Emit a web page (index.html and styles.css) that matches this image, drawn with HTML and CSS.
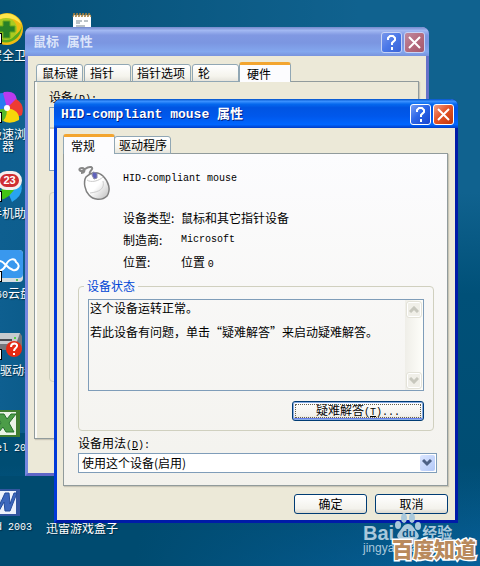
FILE: index.html
```html
<!DOCTYPE html>
<html lang="zh-CN">
<head>
<meta charset="utf-8">
<meta name="viewport" content="width=device-width, initial-scale=1">
<title>HID-compliant mouse 属性</title>
<link rel="stylesheet" href="styles.css">
</head>
<body>
<main class="desktop">
  <div class="shortcut safe">
    <svg width="34" height="34" viewBox="0 0 34 34"><circle cx="17" cy="17" r="16" fill="#eebc12"/><path d="M4 25C13 35 31 31 32 14c-3 10-15 16-28 11z" fill="#58a91c"/><path d="M3 9C10-1 27-1 31 12 24 5 14 5 3 9z" fill="#ffe64b"/><circle cx="16" cy="17" r="11" fill="#a9cb21"/><path d="M13 9h7v5h5v6h-5v6h-7v-6H8v-6h5z" fill="#288127" stroke="#69a81d"/></svg>
    <span class="arrow"></span><span class="name">安全卫士</span>
  </div>
  <div class="shortcut browser">
    <svg width="34" height="34" viewBox="0 0 34 34"><path d="M17 17Q7 7 14 1q12-2 13 8z" fill="#b83aee"/><path d="M17 17L26 8q9 5 6 16-5 4-15-7z" fill="#ed3b33"/><path d="M17 17q13 2 12 12-9 5-16 1z" fill="#f7d60a"/><path d="M17 17q0 14-8 14-8-5-8-13z" fill="#55b72a"/><path d="M17 17Q4 21 2 11 5 2 13 2z" fill="#287bf0"/><circle cx="17" cy="17" r="3" fill="#fff"/></svg>
    <span class="arrow"></span><span class="name">极速浏<br>&ensp;&ensp;器</span>
  </div>
  <div class="shortcut phone">
    <svg width="34" height="34" viewBox="0 0 34 34"><path d="M17 20Q24 8 30 11q6 13-8 21z" fill="#28a4f0"/><path d="M7 29q11 3 20-14l-14 2z" fill="#42c515"/><path d="M3 10l12-3 3 8-11 4z" fill="#ffc325"/></svg>
    <span class="badge">23</span><span class="arrow"></span><span class="name">手机助手</span>
  </div>
  <div class="shortcut cloud">
    <svg width="34" height="34" viewBox="0 0 34 34"><rect width="33" height="32" rx="4" fill="#d5dde0"/><rect width="33" height="28" rx="4" fill="#3998ee"/><path d="M4 20c7 3 10-1 12-5 3-7 9-7 10-3 5 3 2 9-3 8-8-3-9-10-14-9-6-1-9 6-5 9z" fill="none" stroke="#fff" stroke-width="2"/><circle cx="27" cy="30" r="1" fill="#37b52b"/></svg>
    <span class="arrow"></span><span class="name"><span class="latin">360</span>云盘</span>
  </div>
  <div class="shortcut driver">
    <svg width="34" height="34" viewBox="0 0 34 34"><path d="M0 5h30l2 3v14H0z" fill="#74777c"/><path d="M0 5h30l-4 11H0z" fill="#c8cbce"/><path d="M2 12h20" stroke="#4a4c51" stroke-width="2"/><circle cx="25" cy="10" r="1" fill="#32d51a"/><circle cx="24" cy="21" r="8" fill="#e52b14"/><path d="M21 19c0-5 7-4 6-1 0 2-3 2-3 5m0 2v2" fill="none" stroke="#fff" stroke-width="2"/></svg>
    <span class="arrow"></span><span class="name">驱动器</span>
  </div>
  <div class="shortcut excel">
    <svg width="34" height="34" viewBox="0 0 34 34"><path d="M1 3h31v27H1z" fill="#3f7c30"/><path d="M3 5h25v23H3z" fill="#eaf3e6"/><path d="M8 7h8l3 5 4-5h5l-7 9 5 9h-8l-3-5-4 5H6l7-9z" fill="#4c9d48" stroke="#24712b"/></svg>
    <span class="arrow"></span><span class="name latin">Excel 2003</span>
  </div>
  <div class="shortcut word">
    <svg width="34" height="34" viewBox="0 0 34 34"><path d="M1 3h31v27H1z" fill="#3256a0"/><path d="M3 5h25v23H3z" fill="#edf2fc"/><path d="M6 7h5l1 11 5-11h4l1 11 4-11h3l-7 18h-5l-1-9-5 9H7z" fill="#3d68be" stroke="#254d9b"/></svg>
    <span class="arrow"></span><span class="name latin">Word 2003</span>
  </div>
  <div class="shortcut game"><span class="name">迅雷游戏盒子</span></div>
  <svg class="notepad" width="20" height="24" viewBox="0 0 20 24"><path d="M1 3h18v20H1z" fill="#fff"/><path d="M1 5l1-4 2 4 1-4 2 4 1-4 2 4 1-4 2 4 1-4 2 4 1-4 2 4" fill="none" stroke="#a8803c"/><path d="M4 9h6M4 11h4M12 9h4M4 14h9" stroke="#77858f"/></svg>

  <section class="window inactive" aria-label="鼠标 属性">
    <header class="titlebar"><h2>鼠标 属性</h2>
      <button class="cap help" aria-label="帮助"><svg width="17" height="17" viewBox="0 0 17 17"><path d="M5 6V4l2-2h3l2 2v2L9 9v2m0 2v3" fill="none" stroke="currentColor" stroke-width="2"/></svg></button>
      <button class="cap close" aria-label="关闭"><svg width="17" height="17" viewBox="0 0 17 17"><path d="M3 3l11 11M14 3L3 14" stroke="currentColor" stroke-width="2"/></svg></button>
    </header>
    <div class="client">
      <div class="tabs" role="tablist">
        <button role="tab" class="tab">鼠标键</button><button role="tab" class="tab">指针</button><button role="tab" class="tab long">指针选项</button><button role="tab" class="tab">轮</button><button role="tab" class="tab active" aria-selected="true">硬件</button>
      </div>
      <div class="panel">
        <div class="caption">设备<span class="latin">(<u>D</u>):</span></div>
        <div class="list"><div class="listhead"></div></div>
        <div class="frame"></div>
      </div>
    </div>
  </section>

  <section class="window front" aria-label="HID-compliant mouse 属性">
    <header class="titlebar"><h1>HID-compliant mouse 属性</h1>
      <button class="cap help" aria-label="帮助"><svg width="17" height="17" viewBox="0 0 17 17"><path d="M5 6V4l2-2h3l2 2v2L9 9v2m0 2v3" fill="none" stroke="currentColor" stroke-width="2"/></svg></button>
      <button class="cap close" aria-label="关闭"><svg width="17" height="17" viewBox="0 0 17 17"><path d="M3 3l11 11M14 3L3 14" stroke="currentColor" stroke-width="2"/></svg></button>
    </header>
    <div class="client">
      <div class="tabs" role="tablist">
        <button role="tab" class="tab active" aria-selected="true">常规</button><button role="tab" class="tab long">驱动程序</button>
      </div>
      <div class="panel">
        <div class="device">
          <svg width="34" height="36" viewBox="0 0 34 36"><defs><linearGradient id="shell" x2="1" y2="1"><stop offset=".5" stop-color="#fff"/><stop offset="1" stop-color="#bbb"/></linearGradient></defs><path d="M12 9C10 6 17 4 13 2 9 1 7 5 4 6 1 6 0 3 4 3c4 0 3 5-1 5" fill="none" stroke="#888" stroke-width="2"/><path d="M8 12c5-5 12-6 17-1 6 6 8 14 4 20-5 5-14 4-18-1-4-4-6-13-3-18z" fill="url(#shell)" stroke="#808080" stroke-width="1.5"/><path d="M9 15c4 3 12 1 16-3M25 16c2 8-4 11-13 12" fill="none" stroke="#ccc"/><path d="M15 7l4 1v5l-3 1-2-4z" fill="#5f61bd" stroke="#8c8ca5"/></svg>
          <div class="latin model">HID-compliant mouse</div>
          <dl><dt>设备类型:</dt><dd>鼠标和其它指针设备</dd><dt>制造商:</dt><dd class="latin">Microsoft</dd><dt>位置:</dt><dd>位置 <span class="latin">0</span></dd></dl>
        </div>
        <fieldset>
          <legend><label for="status">设备状态</label></legend>
          <div class="statusbox">
            <textarea id="status" readonly>这个设备运转正常。

若此设备有问题，单击“疑难解答”来启动疑难解答。</textarea>
            <div class="scroll" aria-hidden="true"><span><svg width="10" height="7" viewBox="0 0 10 7"><path d="M1 6l4-4 4 4" fill="none" stroke="#c7c7bd" stroke-width="3"/></svg></span><span><svg width="10" height="7" viewBox="0 0 10 7"><path d="M1 1l4 4 4-4" fill="none" stroke="#c7c7bd" stroke-width="3"/></svg></span></div>
          </div>
          <button class="push focused">疑难解答<span class="latin">(<u>T</u>)...</span></button>
        </fieldset>
        <label class="usage" for="usage">设备用法<span class="latin">(<u>D</u>):</span></label>
        <div class="combo"><select id="usage"><option>使用这个设备(启用)</option></select><span class="drop"><svg width="11" height="8" viewBox="0 0 11 8"><path d="M1 1l4 4 4-4" fill="none" stroke="#4d6185" stroke-width="3"/></svg></span></div>
      </div>
      <footer><button class="push">确定</button><button class="push">取消</button></footer>
    </div>
  </section>

  <div class="mark">
    <div class="brand">Bai<svg width="28" height="30" viewBox="0 0 28 30"><g fill="currentColor"><ellipse cx="4" cy="13" rx="3" ry="4"/><ellipse cx="10" cy="6" rx="3" ry="5"/><ellipse cx="18" cy="6" rx="3" ry="5"/><ellipse cx="24" cy="14" rx="3" ry="4"/><path d="M14 12c5 0 6 5 9 8 5 6-1 9-9 7-8 2-14-1-9-7 3-3 4-8 9-8z"/></g><text x="8" y="25" class="du">du</text></svg><span>经验</span></div>
    <div class="site">jingyan.baidu</div>
  </div>
  <div class="stamp">百度知道</div>
</main>
</body>
</html>
```
FILE: styles.css
```css
* { box-sizing: border-box; }
body { margin: 0; font: 12px/14px "Noto Sans CJK SC", sans-serif; color: #000; }
button, textarea, select { font: inherit; color: inherit; margin: 0; }
button { padding: 0; }
h1, h2, dl, dd { margin: 0; }
svg { display: block; flex: none; }
.latin { font-family: "Liberation Mono", monospace; font-size: 10px; }

.desktop {
  position: relative;
  min-height: 100vh;
  overflow: hidden;
  background:
    linear-gradient(90deg, rgba(0, 72, 108, .7), transparent 75%) 0 0 / 100% 100px no-repeat,
    linear-gradient(100deg, #004b70 30%, transparent) 0 100% / 100% 90px no-repeat,
    linear-gradient(90deg, #0e5f90, transparent 30%) 0 50% / 100% 300px no-repeat,
    linear-gradient(#10628f, #10628f 34%, #005078 52%, #004d73 82%, #07609b);
}

.shortcut { position: absolute; left: -10px; color: #fff; text-shadow: 1px 1px 1px #002b45; white-space: nowrap; }
.shortcut .arrow { position: absolute; left: 0; top: 21px; width: 12px; height: 11px; background: #fff; border: 1px solid #000; }
.shortcut .name { display: block; margin-top: 2px; line-height: 12px; }
.safe { top: 12px; }
.browser { top: 91px; }
.phone { top: 170px; }
.cloud { top: 250px; }
.driver { top: 328px; }
.excel { top: 407px; left: -12px; }
.word { top: 486px; left: -12px; }
.game { top: 520px; left: 46px; }
.safe .name, .browser .name, .phone .name, .cloud .name { margin-top: 3px; }
.driver .name { margin-left: 10px; }
.excel .name, .word .name { margin-left: -10px; font-size: 10px; }
.game .arrow, .game svg { display: none; }
.game, .driver .arrow { white-space: nowrap; }
.badge {
  position: absolute; left: 7px; top: 1px; width: 25px; height: 19px;
  border: 3px solid #f5eeee; border-radius: 10px; background: #cf2d31;
  font: bold 11px/13px "Liberation Sans", sans-serif; text-align: center; text-shadow: none;
}
.notepad { position: absolute; left: 72px; top: 12px; }

.window {
  position: absolute;
  width: 404px;
  border: solid #0039d8;
  border-width: 0 3px 3px;
  border-right-color: #001ba8;
  border-bottom-color: #001ba8;
  border-radius: 7px 7px 0 0;
  background: #ece9d8;
}
.front { left: 54px; top: 99px; }
.inactive { left: 25px; top: 27px; border-color: #7587df; border-right-color: #6671c9; border-bottom-color: #6066c7; }
.titlebar {
  display: flex; align-items: center; gap: 2px;
  height: 29px; margin: 0 -3px; padding: 1px 4px 0 7px;
  border-radius: 7px 7px 0 0;
  background: linear-gradient(#0050c8, #3a91ff 8%, #0468ee 18%, #0054e2 30%, #0058ec 60%, #0066ff 88%, #003dc7);
}
.inactive .titlebar { padding-left: 8px; background: linear-gradient(#7489cc, #a2b8f2 12%, #8098e2 28%, #7b96e1 55%, #83a7ee 85%, #7893dd); }
.titlebar h1, .titlebar h2 {
  flex: 1; padding-top: 2px; color: #fff; font: bold 13px/20px "Liberation Mono", "Noto Sans CJK SC", monospace;
  text-shadow: 1px 1px #001f84;
}
.titlebar h2 { color: #dce5fa; text-shadow: none; }
.cap {
  display: grid; place-items: center; width: 21px; height: 21px;
  border: 1px solid #fff; border-radius: 3px; color: #fff;
  background: linear-gradient(135deg, #789ff4, #2d67e8 45%, #1644ce);
}
.cap.close { background: linear-gradient(135deg, #f2a088, #e45428 45%, #c03609); }
.inactive .cap { border-color: #c7d3f5; background: linear-gradient(135deg, #7896ec, #4a78e8 50%, #3a62d6); }
.inactive .cap.close { background: linear-gradient(135deg, #c08aa0, #b56b7e 50%, #a4586c); }

.client { padding: 6px 7px 6px 6px; }
.tabs { display: flex; align-items: flex-end; height: 20px; position: relative; margin-bottom: -1px; }
.tab {
  width: 47px; height: 18px; padding: 0 0 0 5px; margin-right: 1px; text-align: left; white-space: nowrap;
  line-height: 16px;
  border: 1px solid #91a7b4; border-radius: 3px 3px 0 0;
  background: linear-gradient(#fff, #f5f4ed 70%, #e6e4dc);
}
.tab.long { width: 57px; padding-left: 4px; }
.tab.active {
  width: 52px; height: 20px; margin: 0; padding-left: 7px; line-height: 14px;
  border-top: 3px solid #f3a52f; border-bottom: 0; background: #fcfcfe;
}
.front .tab.long { margin-left: -1px; }
.panel {
  border: 1px solid #919b9c; box-shadow: 1px 1px 1px #c8c5b6;
  padding: 11px 10px 12px 14px;
  background: linear-gradient(#fcfcfe, #f3f2ed);
}
.inactive .client { padding-bottom: 34px; }
.inactive .tabs { padding-left: 2px; }
.inactive .tab.long { width: 59px; }
.inactive .tab:nth-child(4) { margin-right: 0; }
.inactive .tab.active { width: 52px; }
.inactive .panel { min-height: 358px; background: #ece9d8; box-shadow: inset 2px 0 #fbfbf8, 1px 1px 1px #c8c5b6; padding-top: 8px; }
.list { height: 64px; border: 1px solid #7f9db9; background: #fff; }
.listhead { height: 21px; background: #ebeadb; border-bottom: 2px solid #d0ceba; }
.frame { height: 190px; margin-top: 21px; border: 1px solid #d0d0bf; border-radius: 4px; }

.device { display: grid; grid-template-columns: 45px 1fr; align-items: start; margin-bottom: 3px; }
.device svg { grid-row: 1; }
.model { padding-top: 7px; }
.device dl { grid-column: 2; display: grid; grid-template-columns: 58px 1fr; line-height: 22px; margin-top: 6px; }
fieldset { margin: 0 3px 0 0; padding: 6px 9px 9px; border: 1px solid #d0d0bf; border-radius: 4px; min-width: 0; }
legend { margin-left: -4px; padding: 0 3px; color: #0046d5; line-height: 14px; }
.statusbox { display: flex; height: 92px; border: 1px solid #7f9db9; }
textarea {
  flex: 1; min-width: 0; resize: none; border: 0; outline: 0; overflow: hidden;
  padding: 2px 0 0 1px; line-height: 12px; background: transparent;
}
.scroll { display: flex; flex-direction: column; justify-content: space-between; width: 18px; padding: 1px; background: linear-gradient(90deg, #efeee8, #fefefa); }
.scroll span { display: grid; place-items: center; height: 17px; border: 1px solid #e4e3d9; border-radius: 3px; background: #f0efe8; box-shadow: inset 0 0 0 1px #fff; }
.push {
  width: 73px; height: 20px; line-height: 16px;
  border: 1px solid #003c74; border-radius: 3px;
  background: linear-gradient(#fff, #f3f2ec 75%, #dcd9cf);
}
.push.focused {
  display: block; width: 132px; margin: 10px 0 0 auto;
  box-shadow: inset 0 0 0 1px #89ade4, inset 0 -2px #6982ee;
  outline: 1px dotted #65604f; outline-offset: -4px;
}
.usage { display: block; margin-top: 5px; line-height: 14px; }
.combo { display: flex; position: relative; }
select {
  flex: 1; height: 20px; appearance: none; border: 1px solid #7f9db9; border-radius: 0;
  padding: 0 20px 0 3px; background: #fff; line-height: 16px;
}
.combo .drop {
  position: absolute; right: 2px; top: 2px; width: 15px; height: 16px; pointer-events: none;
  display: grid; place-items: center; border-radius: 2px; background: linear-gradient(135deg, #dbe6ff, #b2c8f8);
}
footer { display: flex; justify-content: flex-end; gap: 8px; padding-top: 8px; }

.mark { position: absolute; left: 363px; top: 513px; color: #a9c8db; font-family: "Liberation Sans", "Noto Sans CJK SC", sans-serif; }
.brand { display: flex; align-items: flex-end; font-size: 20px; font-weight: bold; line-height: 18px; height: 29px; }
.brand span { font-size: 15px; }
.du { font: bold 11px "Liberation Sans", sans-serif; fill: #075586; }
.site { font-size: 12px; line-height: 12px; }
.stamp {
  position: absolute; left: 392px; top: 536px; color: #b98a5c;
  font-size: 21px; font-weight: 900; line-height: 24px; white-space: nowrap;
  -webkit-text-stroke: 3px #fff; paint-order: stroke fill;
}
```
